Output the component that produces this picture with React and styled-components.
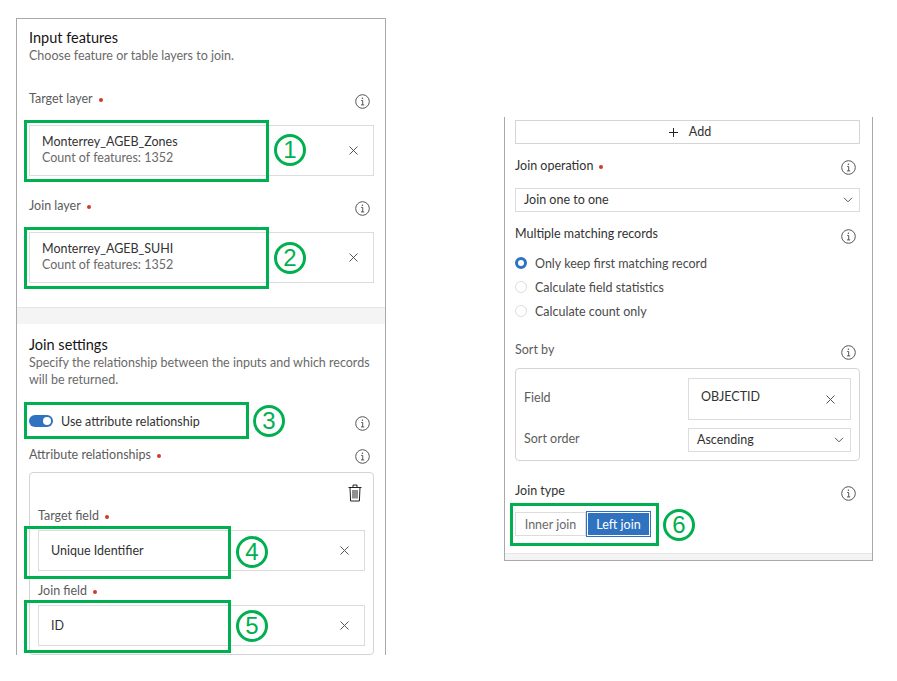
import React from "react";
import styled, { createGlobalStyle } from "styled-components";

const GlobalStyle = createGlobalStyle`
  html, body {
    margin: 0;
    background: #fff;
  }
  body {
    font-family: "Lato", "Open Sans", sans-serif;
    font-size: 12.5px;
    color: #4a4a4a;
  }
  * {
    box-sizing: border-box;
  }
`;

const Page = styled.div`
  display: flex;
  align-items: flex-start;
  height: 681px;
  padding: 18px 0 0 16px;
`;

const LeftPanel = styled.div`
  width: 370px;
  border: 1px solid #a9a9a9;
  border-bottom: 0;
`;

const RightPanel = styled.div`
  width: 369px;
  margin: 99px 0 0 118px;
  border: 1px solid #a9a9a9;
  border-top: 0;
`;

const Section = styled.section`
  padding: ${p => p.$padding};
`;

const Strip = styled.div`
  height: ${p => p.$height}px;
  background: #f4f4f4;
  border-top: 1px solid #e6e6e6;
`;

const Heading = styled.h2`
  height: 18px;
  margin: 0;
  padding-top: 1px;
  font-size: 14.5px;
  font-weight: 400;
  line-height: 18px;
  color: #151515;
`;

const Hint = styled.p`
  margin: 1px 0 0;
  line-height: 17px;
  color: #6a6a6a;
`;

const Row = styled.div`
  position: relative;
  display: flex;
  justify-content: space-between;
  height: ${p => p.$height || 20}px;
  margin-top: ${p => p.$top}px;
  padding-right: 4px;
`;

const Label = styled.span`
  line-height: 20px;
  padding-bottom: ${p => p.$lift || 0}px;
  color: ${p => p.$strong ? "#323232" : "#5c5c5c"};
`;

const Dot = styled.span`
  display: inline-block;
  width: 4px;
  height: 4px;
  margin-left: 6px;
  border-radius: 50%;
  background: #d0392b;
  vertical-align: 1px;
`;

const Field = styled.div`
  position: relative;
  display: flex;
  align-items: center;
  justify-content: space-between;
  height: ${p => p.$height}px;
  margin-top: ${p => p.$top}px;
  padding: 0 14px 0 12px;
  border: 1px solid #dcdcdc;
  background: #fff;
  color: #323232;
`;

const FieldBody = styled.div`
  padding-bottom: ${p => p.$lift || 0}px;
`;

const FieldText = styled.div`
  line-height: 16px;
`;

const FieldMeta = styled.div`
  line-height: 16px;
  color: #6a6a6a;
`;

const Callout = styled.div`
  position: absolute;
  top: ${p => p.$y}px;
  left: ${p => p.$x}px;
  width: ${p => p.$w}px;
  height: ${p => p.$h}px;
  border: 3px solid #00b050;
  pointer-events: none;
`;

const Badge = styled.span`
  position: absolute;
  top: ${p => p.$y}px;
  left: ${p => p.$x}px;
  display: flex;
  align-items: center;
  justify-content: center;
  width: 32px;
  height: 32px;
  border: 3px solid #00b050;
  border-radius: 50%;
  font-family: "Liberation Sans", sans-serif;
  font-size: 24px;
  color: #00b050;
`;

const Toggle = styled.span`
  position: relative;
  display: inline-block;
  width: 24px;
  height: 12px;
  border-radius: 6px;
  background: #2f72bf;
  &::after {
    content: "";
    position: absolute;
    top: 2px;
    right: 2px;
    width: 8px;
    height: 8px;
    border-radius: 50%;
    background: #fff;
  }
`;

const ToggleLabel = styled.label`
  display: flex;
  align-items: center;
  gap: 8px;
  height: 20px;
  color: #323232;
`;

const Card = styled.div`
  margin-top: 8px;
  padding: ${p => p.$padding};
  border: 1px solid #d4d4d4;
  border-radius: 4px;
`;

const CardTools = styled.div`
  display: flex;
  justify-content: flex-end;
  height: 18px;
  padding-right: 3px;
`;

const AddButton = styled.div`
  display: flex;
  align-items: center;
  justify-content: center;
  gap: 11px;
  height: 24px;
  padding-left: 5px;
  border: 1px solid #d4d4d4;
  color: #323232;
  span {
    padding-bottom: 2px;
  }
`;

const Select = styled.div`
  display: flex;
  align-items: center;
  justify-content: space-between;
  height: 24px;
  margin-top: ${p => p.$top || 0}px;
  padding: 0 6px 0 8px;
  border: 1px solid #dcdcdc;
  color: #323232;
  span {
    padding-bottom: 2px;
  }
`;

const RadioGroup = styled.div`
  margin-top: 7px;
`;

const RadioRow = styled.div`
  display: flex;
  align-items: center;
  gap: 8px;
  height: 24px;
  color: #4a4a4a;
`;

const Radio = styled.span`
  width: 12px;
  height: 12px;
  border-radius: 50%;
  background: #fff;
  border: ${p => p.$checked ? "3.5px solid #2f72bf" : "1px solid #dcdcdc"};
`;

const SortGrid = styled.div`
  display: grid;
  grid-template-columns: 164px 163px;
  row-gap: 8px;
  align-items: center;
`;

const Segments = styled.div`
  position: relative;
  display: flex;
  width: 136px;
  height: 24px;
  margin: 11px 0 17px;
`;

const Segment = styled.div`
  display: flex;
  align-items: center;
  justify-content: center;
  width: ${p => p.$active ? 65 : 71}px;
  height: ${p => p.$active ? "26px" : "24px"};
  margin-top: ${p => p.$active ? "-1px" : 0};
  border: 1px solid ${p => p.$active ? "#2f72bf" : "#dcdcdc"};
  background: ${p => p.$active ? "#2f72bf" : "#fff"};
  color: ${p => p.$active ? "#fff" : "#6a6a6a"};
  outline: ${p => p.$active ? "1px solid #fff" : "none"};
  outline-offset: -2px;
`;

const Svg = styled.svg`
  flex: none;
  display: block;
  align-self: ${p => p.$self || "auto"};
`;

const InfoIcon = () => (
  <Svg $self="flex-end" width="15" height="15" viewBox="0 0 15 15" fill="none" stroke="#555">
    <circle cx="7.5" cy="7.5" r="6.8" />
    <path d="M6.2 6.5h1.5v4.4M6 10.9h3.2" />
    <circle cx="7.4" cy="4.2" r=".8" fill="#555" stroke="none" />
  </Svg>
);

const CloseIcon = () => (
  <Svg width="11" height="11" viewBox="0 0 11 11" fill="none" stroke="#555">
    <path d="M1.5 1.5l8 8M9.5 1.5l-8 8" />
  </Svg>
);

const ChevronIcon = () => (
  <Svg width="10" height="6" viewBox="0 0 10 6" fill="none" stroke="#555">
    <path d="M1 .8l4 4 4-4" />
  </Svg>
);

const PlusIcon = () => (
  <Svg width="9" height="9" viewBox="0 0 9 9" fill="none" stroke="#222">
    <path d="M4.5 0v9M0 4.5h9" />
  </Svg>
);

const TrashIcon = () => (
  <Svg width="14" height="18" viewBox="0 0 14 18" fill="none" stroke="#222">
    <path d="M.5 3.5h13M5 3.5v-2.5h4v2.5M2 3.5l.6 13.5h8.8l.6-13.5M5 6v8.5M7 6v8.5M9 6v8.5" />
  </Svg>
);

const Required = () => <Dot />;

export default function App() {
  return (
    <Page>
      <GlobalStyle />
      <LeftPanel>
        <Section $padding="9px 11px 24px 12px">
          <Heading>Input features</Heading>
          <Hint>Choose feature or table layers to join.</Hint>

          <Row $top={25}>
            <Label>Target layer<Required /></Label>
            <InfoIcon />
          </Row>
          <Field $top={16} $height={51}>
            <FieldBody $lift={2}>
              <FieldText>Monterrey_AGEB_Zones</FieldText>
              <FieldMeta>Count of features: 1352</FieldMeta>
            </FieldBody>
            <CloseIcon />
            <Callout $x={-6} $y={-6} $w={245} $h={62}>
              <Badge $x={247} $y={11}>1</Badge>
            </Callout>
          </Field>

          <Row $top={20}>
            <Label>Join layer<Required /></Label>
            <InfoIcon />
          </Row>
          <Field $top={16} $height={51}>
            <FieldBody $lift={2}>
              <FieldText>Monterrey_AGEB_SUHI</FieldText>
              <FieldMeta>Count of features: 1352</FieldMeta>
            </FieldBody>
            <CloseIcon />
            <Callout $x={-6} $y={-6} $w={245} $h={62}>
              <Badge $x={247} $y={12}>2</Badge>
            </Callout>
          </Field>
        </Section>

        <Strip $height={17} />

        <Section $padding="11px 11px 0 12px">
          <Heading>Join settings</Heading>
          <Hint>Specify the relationship between the inputs and which records will be returned.</Hint>

          <Row $top={23}>
            <ToggleLabel><Toggle />Use attribute relationship</ToggleLabel>
            <InfoIcon />
            <Callout $x={-5} $y={-9} $w={225} $h={37}>
              <Badge $x={226} $y={0}>3</Badge>
            </Callout>
          </Row>
          <Row $top={14} $height={19}>
            <Label>Attribute relationships<Required /></Label>
            <InfoIcon />
          </Row>

          <Card $padding="11px 8px 8px">
            <CardTools><TrashIcon /></CardTools>
            <Row $top={4} $height={18}><Label>Target field<Required /></Label></Row>
            <Field $top={6} $height={41}>
              <FieldBody><FieldText>Unique Identifier</FieldText></FieldBody>
              <CloseIcon />
              <Callout $x={-15} $y={-5} $w={207} $h={53}>
                <Badge $x={209} $y={7}>4</Badge>
              </Callout>
            </Field>
            <Row $top={10} $height={18}><Label>Join field<Required /></Label></Row>
            <Field $top={6} $height={41}>
              <FieldBody><FieldText>ID</FieldText></FieldBody>
              <CloseIcon />
              <Callout $x={-15} $y={-6} $w={207} $h={53}>
                <Badge $x={209} $y={7}>5</Badge>
              </Callout>
            </Field>
          </Card>
        </Section>
      </LeftPanel>

      <RightPanel>
        <Section $padding="3px 12px 0 10px">
          <AddButton><PlusIcon /><span>Add</span></AddButton>

          <Row $top={12} $height={19}>
            <Label $strong>Join operation<Required /></Label>
            <InfoIcon />
          </Row>
          <Select $top={13}><span>Join one to one</span><ChevronIcon /></Select>

          <Row $top={12}>
            <Label $strong>Multiple matching records</Label>
            <InfoIcon />
          </Row>
          <RadioGroup>
            <RadioRow><Radio $checked />Only keep first matching record</RadioRow>
            <RadioRow><Radio />Calculate field statistics</RadioRow>
            <RadioRow><Radio />Calculate count only</RadioRow>
          </RadioGroup>

          <Row $top={17}>
            <Label>Sort by</Label>
            <InfoIcon />
          </Row>
          <Card $padding="9px 8px 8px">
            <SortGrid>
              <Label $lift={3}>Field</Label>
              <Field $top={0} $height={42}>
                <FieldBody $lift={4}><FieldText>OBJECTID</FieldText></FieldBody>
                <CloseIcon />
              </Field>
              <Label $lift={3}>Sort order</Label>
              <Select><span>Ascending</span><ChevronIcon /></Select>
            </SortGrid>
          </Card>

          <Row $top={20}>
            <Label $strong>Join type</Label>
            <InfoIcon />
          </Row>
          <Segments>
            <Segment>Inner join</Segment>
            <Segment $active>Left join</Segment>
            <Callout $x={-5} $y={-9} $w={149} $h={43}>
              <Badge $x={150} $y={3}>6</Badge>
            </Callout>
          </Segments>
        </Section>
        <Strip $height={7} />
      </RightPanel>
    </Page>
  );
}
